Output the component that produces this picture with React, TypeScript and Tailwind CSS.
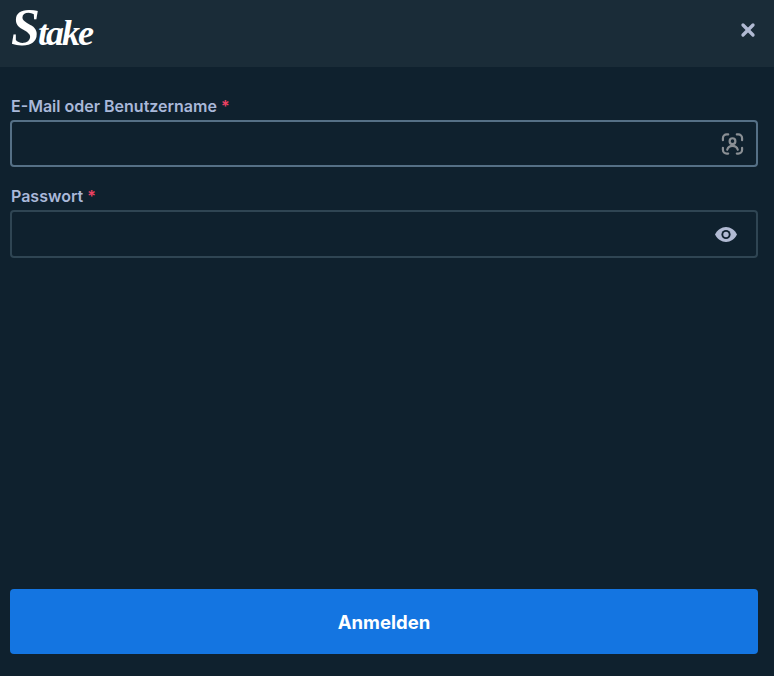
import { X } from 'lucide-react';

const font = { fontFamily: 'Inter, "Liberation Sans", sans-serif' };

function FaceIcon() {
  return (
    <svg width="23" height="24" viewBox="0 0 24 24" fill="none" stroke="#8a8f94" strokeWidth="2.300" strokeLinecap="round">
      <path d="M2 8V6a4 4 0 0 1 4-4h1.500" />
      <path d="M16.500 2H18a4 4 0 0 1 4 4v2" />
      <path d="M2 16v2a4 4 0 0 0 4 4h1.500" />
      <path d="M16.500 22H18a4 4 0 0 0 4-4v-2" />
      <circle cx="12" cy="9" r="3" />
      <path d="M6.500 18c.8-2.600 3-4 5.500-4s4.700 1.400 5.500 4" />
    </svg>
  );
}

function EyeIcon() {
  return (
    <svg width="22" height="15" viewBox="0 0 22 15">
      <path d="M0 7.500C2.500 2.800 6.500 0 11 0s8.500 2.800 11 7.500C19.500 12.200 15.500 15 11 15S2.500 12.200 0 7.500Z" fill="#b1bad3" />
      <circle cx="11" cy="7.500" r="4.600" fill="#0f212e" />
      <circle cx="11" cy="7.500" r="2.700" fill="#b1bad3" />
    </svg>
  );
}

function Field({ label, focused, icon }: { label: string; focused?: boolean; icon: React.ReactNode }) {
  return (
    <div className="flex flex-col gap-[5px]">
      <label className="pl-[1px] text-[16px] leading-[18px] font-semibold text-[#a9b8d9]">
        {label} <span className="text-[#ed4163]">*</span>
      </label>
      <div
        className={
          'rounded-[4px] border-2 bg-[#0f212e] flex items-center justify-end ' +
          (focused ? 'h-[47px] border-[#557086] pr-[12px]' : 'h-[48px] border-[#2f4553] pr-[19px]')
        }
      >
        {icon}
      </div>
    </div>
  );
}

export default function App() {
  return (
    <div className="h-[676px] flex flex-col bg-[#0f212e]" style={font}>
      <header className="h-[67px] shrink-0 bg-[#1a2c38] flex items-start justify-between pl-[11px] pr-[16px]">
        <span
          className="mt-[2px] text-white text-[36px] leading-[52px] font-bold italic tracking-[-2px]"
          style={{ fontFamily: '"Liberation Serif", serif' }}
        >
          <span className="text-[52px]">S</span>take
        </span>
        <X size={20} strokeWidth={4} className="mt-[20px] text-[#b1bad3]" />
      </header>

      <main className="flex-1 flex flex-col gap-[20px] pl-[10px] pr-[16px] pt-[30px]">
        <Field label="E-Mail oder Benutzername" focused icon={<FaceIcon />} />
        <Field label="Passwort" icon={<EyeIcon />} />
      </main>

      <div className="pl-[10px] pr-[16px] pb-[22px]">
        <button className="w-full h-[65px] rounded-[4px] bg-[#1475e1] text-white text-[18.500px] font-bold pt-[3px]">
          Anmelden
        </button>
      </div>
    </div>
  );
}
